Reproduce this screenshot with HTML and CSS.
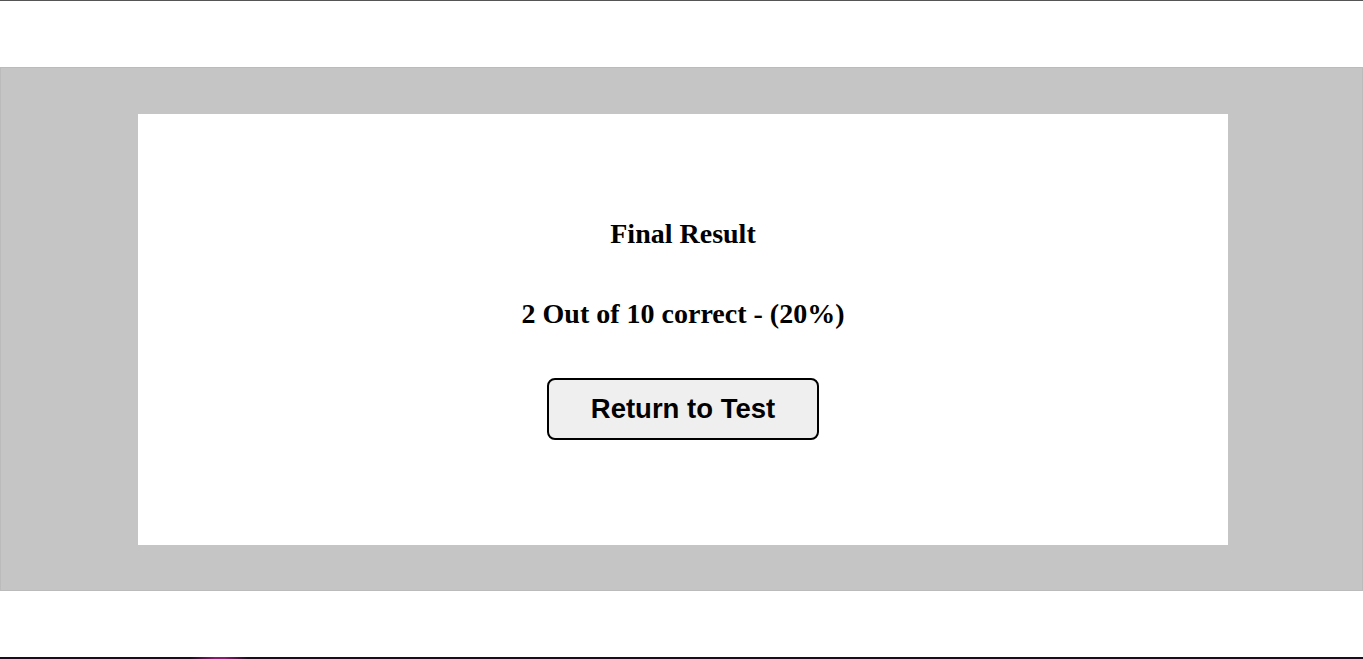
FILE: index.html
```html
<!DOCTYPE html>
<html lang="en">
<head>
<meta charset="utf-8">
<title>Final Result</title>
<link rel="stylesheet" href="styles.css">
</head>
<body>
<header class="top"></header>
<main class="stage">
  <section class="card">
    <h2 class="title">Final Result</h2>
    <h2 class="score">2 Out of 10 correct - (20%)</h2>
    <button class="btn" type="button">Return to Test</button>
  </section>
</main>
<div class="spacer"></div>
<footer class="foot"></footer>
</body>
</html>
```
FILE: styles.css
```css
html, body {
  margin: 0;
  padding: 0;
  background: #ffffff;
  overflow: hidden;
}
body {
  font-family: "Liberation Serif", "Times New Roman", serif;
  color: #000;
  height: 659px;
}
.top {
  height: 66px;
  border-top: 1px solid #555555;
}
.stage {
  background: #c6c5c6;
  border: 1px solid #bcbbbc;
  padding: 46px 0 45px 137px;
}
.card {
  width: 1090px;
  height: 431px;
  box-sizing: border-box;
  background: #ffffff;
  padding-top: 104px;
  display: flex;
  flex-direction: column;
  align-items: center;
}
.title, .score {
  margin: 0;
  font-size: 28px;
  line-height: 31px;
  font-weight: bold;
}
.score {
  margin-top: 49px;
}
.btn {
  margin-top: 49px;
  width: 272px;
  height: 62px;
  box-sizing: border-box;
  border: 2px solid #000;
  border-radius: 8px;
  background: #efefef;
  font-family: "Liberation Sans", Arial, sans-serif;
  font-weight: bold;
  font-size: 27.5px;
  color: #000;
  padding: 0;
}
.spacer {
  height: 66px;
}
.foot {
  height: 10px;
  background: linear-gradient(90deg, #1e0a1a 0px, #1e0a1a 190px, #8a1a6a 215px, #8a1a6a 225px, #1e0a1a 248px, #1e0a1a 100%);
}
```
